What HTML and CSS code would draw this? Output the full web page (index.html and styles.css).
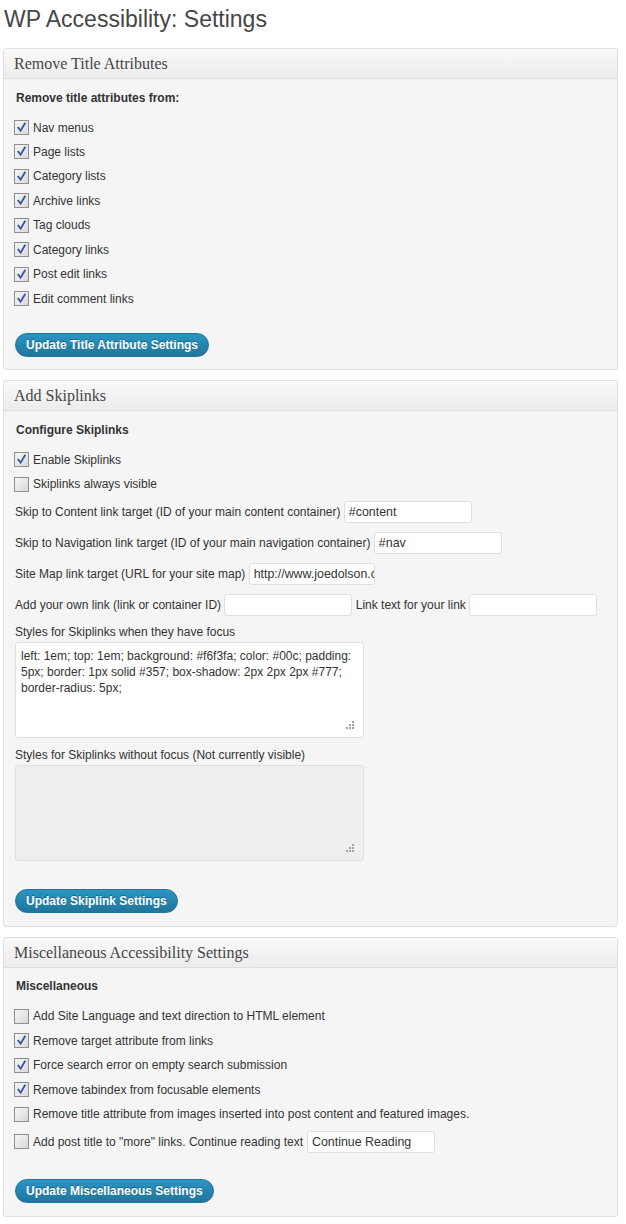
FILE: index.html
```html
<!DOCTYPE html>
<html lang="en">
<head>
<meta charset="utf-8">
<title>WP Accessibility: Settings</title>
<link rel="stylesheet" href="styles.css">
</head>
<body>
<div class="wrap">
  <h1 class="page-title">WP Accessibility: Settings</h1>

  <section class="panel">
    <h2 class="panel-head">Remove Title Attributes</h2>
    <div class="panel-body">
      <h3 class="group">Remove title attributes from:</h3>
      <ul class="checks">
        <li class="check-row"><span class="cb on"><svg viewBox="0 0 14 14"><path d="M3.6 7.2 L6 10.4 L10.6 2.8"/></svg></span>Nav menus</li>
        <li class="check-row"><span class="cb on"><svg viewBox="0 0 14 14"><path d="M3.6 7.2 L6 10.4 L10.6 2.8"/></svg></span>Page lists</li>
        <li class="check-row"><span class="cb on"><svg viewBox="0 0 14 14"><path d="M3.6 7.2 L6 10.4 L10.6 2.8"/></svg></span>Category lists</li>
        <li class="check-row"><span class="cb on"><svg viewBox="0 0 14 14"><path d="M3.6 7.2 L6 10.4 L10.6 2.8"/></svg></span>Archive links</li>
        <li class="check-row"><span class="cb on"><svg viewBox="0 0 14 14"><path d="M3.6 7.2 L6 10.4 L10.6 2.8"/></svg></span>Tag clouds</li>
        <li class="check-row"><span class="cb on"><svg viewBox="0 0 14 14"><path d="M3.6 7.2 L6 10.4 L10.6 2.8"/></svg></span>Category links</li>
        <li class="check-row"><span class="cb on"><svg viewBox="0 0 14 14"><path d="M3.6 7.2 L6 10.4 L10.6 2.8"/></svg></span>Post edit links</li>
        <li class="check-row"><span class="cb on"><svg viewBox="0 0 14 14"><path d="M3.6 7.2 L6 10.4 L10.6 2.8"/></svg></span>Edit comment links</li>
      </ul>
      <button class="btn btn-gap">Update Title Attribute Settings</button>
    </div>
  </section>

  <section class="panel">
    <h2 class="panel-head">Add Skiplinks</h2>
    <div class="panel-body">
      <h3 class="group">Configure Skiplinks</h3>
      <ul class="checks">
        <li class="check-row"><span class="cb on"><svg viewBox="0 0 14 14"><path d="M3.6 7.2 L6 10.4 L10.6 2.8"/></svg></span>Enable Skiplinks</li>
        <li class="check-row"><span class="cb"></span>Skiplinks always visible</li>
      </ul>
      <div class="field-row">Skip to Content link target (ID of your main content container) <span class="input w127">#content</span></div>
      <div class="field-row">Skip to Navigation link target (ID of your main navigation container) <span class="input w127">#nav</span></div>
      <div class="field-row">Site Map link target (URL for your site map) <span class="input w126">http://www.joedolson.com/</span></div>
      <div class="field-row">Add your own link (link or container ID) <span class="input w128"></span> Link text for your link <span class="input w128"></span></div>
      <div class="label-line">Styles for Skiplinks when they have focus</div>
      <div class="textarea">left: 1em; top: 1em; background: #f6f3fa; color: #00c; padding: 5px; border: 1px solid #357; box-shadow: 2px 2px 2px #777; border-radius: 5px;<span class="grip"><svg viewBox="0 0 9 9"><rect x="6" y="0" width="2" height="2"/><rect x="3" y="3" width="2" height="2"/><rect x="6" y="3" width="2" height="2"/><rect x="0" y="6" width="2" height="2"/><rect x="3" y="6" width="2" height="2"/><rect x="6" y="6" width="2" height="2"/></svg></span></div>
      <div class="label-line gap7">Styles for Skiplinks without focus (Not currently visible)</div>
      <div class="textarea disabled"><span class="grip"><svg viewBox="0 0 9 9"><rect x="6" y="0" width="2" height="2"/><rect x="3" y="3" width="2" height="2"/><rect x="6" y="3" width="2" height="2"/><rect x="0" y="6" width="2" height="2"/><rect x="3" y="6" width="2" height="2"/><rect x="6" y="6" width="2" height="2"/></svg></span></div>
      <button class="btn btn-gap28">Update Skiplink Settings</button>
    </div>
  </section>

  <section class="panel">
    <h2 class="panel-head">Miscellaneous Accessibility Settings</h2>
    <div class="panel-body">
      <h3 class="group">Miscellaneous</h3>
      <ul class="checks">
        <li class="check-row"><span class="cb"></span>Add Site Language and text direction to HTML element</li>
        <li class="check-row"><span class="cb on"><svg viewBox="0 0 14 14"><path d="M3.6 7.2 L6 10.4 L10.6 2.8"/></svg></span>Remove target attribute from links</li>
        <li class="check-row"><span class="cb on"><svg viewBox="0 0 14 14"><path d="M3.6 7.2 L6 10.4 L10.6 2.8"/></svg></span>Force search error on empty search submission</li>
        <li class="check-row"><span class="cb on"><svg viewBox="0 0 14 14"><path d="M3.6 7.2 L6 10.4 L10.6 2.8"/></svg></span>Remove tabindex from focusable elements</li>
        <li class="check-row"><span class="cb"></span>Remove title attribute from images inserted into post content and featured images.</li>
        <li class="check-row tall"><span class="cb"></span>Add post title to "more" links. Continue reading text <span class="input w127 ml">Continue Reading</span></li>
      </ul>
      <button class="btn btn-gap">Update Miscellaneous Settings</button>
    </div>
  </section>
</div>
</body>
</html>
```

FILE: styles.css
```css
* { box-sizing: border-box; }

html, body {
  margin: 0;
  padding: 0;
  background: #ffffff;
}

body {
  font-family: "Liberation Sans", Arial, sans-serif;
  font-size: 12px;
  color: #333333;
}

.wrap {
  width: 615px;
  margin-left: 3px;
  padding-top: 5px;
}

.page-title {
  margin: 0 0 14px 1px;
  font-family: "Liberation Sans", Arial, sans-serif;
  font-weight: normal;
  font-size: 23px;
  line-height: 29px;
  color: #464646;
}

.panel {
  border: 1px solid #dfdfdf;
  border-radius: 3px;
  background: #f5f5f5;
  margin-bottom: 10px;
}

.panel-head {
  margin: 0;
  height: 30px;
  padding: 0 10px;
  font-family: "Liberation Serif", "Times New Roman", serif;
  font-weight: normal;
  font-size: 16px;
  line-height: 30px;
  color: #464646;
  background: linear-gradient(to bottom, #f9f9f9, #ececec);
  border-bottom: 1px solid #dfdfdf;
  border-radius: 3px 3px 0 0;
}

.panel-body {
  padding: 8.5px 10px 12.5px 10px;
}

.group {
  margin: 0 0 0 2px;
  height: 20px;
  font-size: 12px;
  line-height: 20px;
  font-weight: bold;
  color: #333333;
}

.checks {
  list-style: none;
  margin: 7.8px 0 0 0;
  padding: 0;
}

.check-row {
  height: 24.45px;
  display: flex;
  align-items: center;
  line-height: 16px;
}

.check-row.tall {
  height: 31px;
}

.cb {
  width: 15px;
  height: 15px;
  flex: none;
  margin-right: 4px;
  border: 1px solid #8e8f8f;
  background: linear-gradient(135deg, #f6f6f6 0%, #d9d9d9 100%);
  display: inline-flex;
  align-items: center;
  justify-content: center;
}

.cb svg {
  width: 13px;
  height: 13px;
}

.cb svg path {
  fill: none;
  stroke: #3a56a0;
  stroke-width: 2;
  stroke-linecap: square;
}

.field-row {
  height: 31px;
  display: flex;
  align-items: center;
  white-space: pre;
  margin-left: 1px;
}

.input {
  display: inline-flex;
  align-items: center;
  height: 22px;
  padding: 0 4px;
  background: #ffffff;
  border: 1px solid #dfdfdf;
  border-radius: 3px;
  font-size: 12.4px;
  color: #333333;
  overflow: hidden;
  white-space: nowrap;
}

.w126 { width: 126px; }
.w127 { width: 128px; }
.w128 { width: 128px; }
.ml { margin-left: 4px; }

.label-line {
  height: 20px;
  line-height: 20px;
  margin-top: 2px;
  margin-left: 1px;
}

.label-line.gap7 {
  margin-top: 7px;
}

.textarea {
  position: relative;
  width: 349px;
  height: 96px;
  margin-left: 1px;
  padding: 5px 5px;
  background: #ffffff;
  border: 1px solid #dfdfdf;
  border-radius: 3px;
  line-height: 16px;
}

.textarea.disabled {
  background: #eeeeee;
}

.grip {
  position: absolute;
  right: 8px;
  bottom: 7px;
  width: 9px;
  height: 9px;
  line-height: 0;
}

.grip svg {
  width: 9px;
  height: 9px;
  fill: #a3a3a3;
}

.btn {
  display: block;
  height: 24px;
  padding: 0 10px;
  margin-left: 1px;
  font-family: "Liberation Sans", Arial, sans-serif;
  font-weight: bold;
  font-size: 12px;
  color: #ffffff;
  border: 1px solid #21759b;
  border-radius: 12px;
  background: linear-gradient(to bottom, #2a95c5, #21759b);
  text-shadow: 0 -1px 0 rgba(0,0,0,0.3);
}

.btn-gap { margin-top: 22px; }
.btn-gap28 { margin-top: 28px; }
```
